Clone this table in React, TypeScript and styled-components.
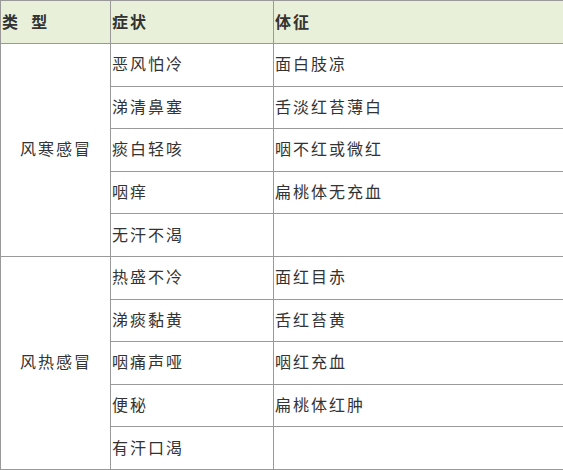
import styled, { createGlobalStyle } from 'styled-components';

const GlobalStyle = createGlobalStyle`
    html, body {
        margin: 0;
        padding: 0;
        background: #ffffff;
    }
    body {
        font-family: 'Noto Sans CJK SC', 'Noto Sans', sans-serif;
        color: #333333;
    }
`;

interface Group {
    type: string;
    rows: [string, string][];
}

const groups: Group[] = [
    {
        type: '风寒感冒',
        rows: [
            ['恶风怕冷', '面白肢凉'],
            ['涕清鼻塞', '舌淡红苔薄白'],
            ['痰白轻咳', '咽不红或微红'],
            ['咽痒', '扁桃体无充血'],
            ['无汗不渴', ''],
        ],
    },
    {
        type: '风热感冒',
        rows: [
            ['热盛不冷', '面红目赤'],
            ['涕痰黏黄', '舌红苔黄'],
            ['咽痛声哑', '咽红充血'],
            ['便秘', '扁桃体红肿'],
            ['有汗口渴', ''],
        ],
    },
];

export default function App() {
    return (
        <>
            <GlobalStyle />
            <S_Table>
                <colgroup>
                    <col style={{ width: 110 }} />
                    <col style={{ width: 163 }} />
                    <col style={{ width: 290 }} />
                </colgroup>
                <thead>
                    <S_HeadRow>
                        <S_HeadCell>类&nbsp;&nbsp;型</S_HeadCell>
                        <S_HeadCell>症状</S_HeadCell>
                        <S_HeadCell>体征</S_HeadCell>
                    </S_HeadRow>
                </thead>
                <tbody>
                    {groups.map((group) =>
                        group.rows.map(([symptom, sign], idx) => (
                            <S_Row key={group.type + idx}>
                                {idx === 0 && <S_TypeCell rowSpan={group.rows.length}>{group.type}</S_TypeCell>}
                                <S_Cell>{symptom}</S_Cell>
                                <S_Cell>{sign}</S_Cell>
                            </S_Row>
                        ))
                    )}
                </tbody>
            </S_Table>
        </>
    );
}

const S_Table = styled.table`
    width: 563px;
    table-layout: fixed;
    border-collapse: collapse;
    border: 1px solid #999999;
    font-size: 16px;
    letter-spacing: 2px;
    line-height: 20px;
`;
const S_HeadRow = styled.tr`
    height: 43px;
    background-color: #e9f0da;
`;
const S_HeadCell = styled.th`
    padding: 0 0 3px 1px;
    border: 1px solid #999999;
    text-align: left;
    font-weight: bold;
    color: #333333;
`;
const S_Row = styled.tr`
    height: 42.6px;
`;
const S_Cell = styled.td`
    padding: 0 0 3px 1px;
    border: 1px solid #999999;
    text-align: left;
    vertical-align: middle;
    color: #333333;
`;
const S_TypeCell = styled(S_Cell)`
    text-align: center;
`;
